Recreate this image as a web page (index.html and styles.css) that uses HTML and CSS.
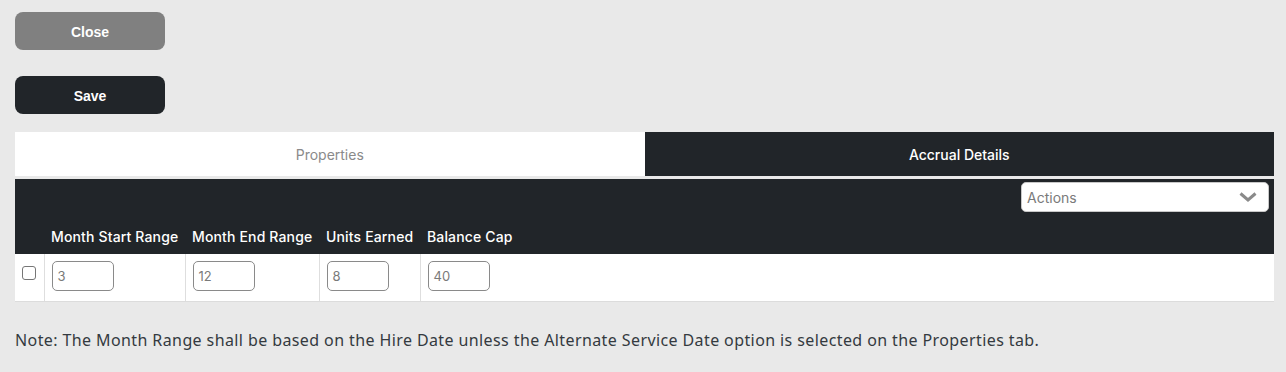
FILE: index.html
```html
<!DOCTYPE html>
<html lang="en">
<head>
<meta charset="utf-8">
<title>Accrual Details</title>
<link rel="stylesheet" href="styles.css">
</head>
<body>
<div class="page">
  <button class="btn btn-close" type="button">Close</button>
  <button class="btn btn-save" type="button">Save</button>

  <div class="tabs">
    <div class="tab">Properties</div>
    <div class="tab tab-active">Accrual Details</div>
  </div>

  <div class="grid">
    <div class="toolbar">
      <div class="select">
        <span class="select-label">Actions</span>
        <svg class="chevron" width="18" height="10" viewBox="0 0 18 10"><path d="M1.5 1.5 L9 8 L16.5 1.5" fill="none" stroke="#8a8a8a" stroke-width="3"/></svg>
      </div>
    </div>
    <table class="data">
      <colgroup>
        <col class="c-check">
        <col class="c-start">
        <col class="c-end">
        <col class="c-units">
        <col>
      </colgroup>
      <thead>
        <tr>
          <th></th>
          <th>Month Start Range</th>
          <th>Month End Range</th>
          <th>Units Earned</th>
          <th>Balance Cap</th>
        </tr>
      </thead>
      <tbody>
        <tr>
          <td class="check-cell"><span class="check"></span></td>
          <td><span class="field">3</span></td>
          <td><span class="field">12</span></td>
          <td><span class="field">8</span></td>
          <td class="last"><span class="field">40</span></td>
        </tr>
      </tbody>
    </table>
  </div>

  <p class="note">Note: The Month Range shall be based on the Hire Date unless the Alternate Service Date option is selected on the Properties tab.</p>
</div>
</body>
</html>
```

FILE: styles.css
```css
html, body {
  margin: 0;
  padding: 0;
  background: #e9e9e9;
}

.page {
  padding: 12px 12px 0 15px;
  font-family: Inter, "Noto Sans", sans-serif;
}

.btn {
  display: block;
  width: 150px;
  height: 38px;
  border: 0;
  border-radius: 8px;
  color: #ffffff;
  font-family: "Liberation Sans", Arial, sans-serif;
  font-weight: bold;
  font-size: 14px;
  padding: 2px 0 0 0;
  cursor: pointer;
}

.btn-close {
  background: #808080;
  margin-bottom: 26px;
}

.btn-save {
  background: #212529;
  margin-bottom: 18px;
}

.tabs {
  display: grid;
  grid-template-columns: 1fr 1fr;
  height: 44px;
  width: 1259px;
}

.tab {
  display: flex;
  align-items: center;
  justify-content: center;
  background: #ffffff;
  color: #8a8a8a;
  font-size: 14px;
}

.tab-active {
  background: #212529;
  color: #ffffff;
  font-weight: 500;
}

.grid {
  margin-top: 3px;
  width: 1259px;
  background: #212529;
}

.toolbar {
  display: flex;
  justify-content: flex-end;
  padding: 3px 5px 0 0;
}

.select {
  box-sizing: border-box;
  width: 248px;
  height: 30px;
  background: #ffffff;
  border: 1px solid #c8c8c8;
  border-radius: 5px;
  display: flex;
  align-items: center;
  justify-content: space-between;
  padding: 0 11px 0 5px;
}

.select-label {
  color: #7a7a7a;
  font-size: 14px;
}

.chevron {
  display: block;
}

.data {
  width: 100%;
  border-collapse: collapse;
  table-layout: fixed;
}

.c-check { width: 29px; }
.c-start { width: 141px; }
.c-end { width: 134px; }
.c-units { width: 101px; }

.data th {
  color: #ffffff;
  font-size: 14px;
  font-weight: 500;
  letter-spacing: 0.15px;
  text-align: left;
  line-height: 20px;
  padding: 15px 0 7px 7px;
  white-space: nowrap;
  vertical-align: bottom;
}

.data td {
  background: #ffffff;
  padding: 7px 0 10px 7px;
  border-right: 1px solid #dedede;
  border-bottom: 1px solid #dcdcdc;
  vertical-align: top;
  height: 30px;
}

.data td.last {
  border-right: 0;
}

.data td.check-cell {
  padding: 12px 0 0 7px;
}

.check {
  display: block;
  box-sizing: border-box;
  width: 14px;
  height: 14px;
  border: 1px solid #767676;
  border-radius: 3px;
  background: #ffffff;
}

.field {
  display: block;
  box-sizing: border-box;
  width: 62px;
  height: 30px;
  border: 1px solid #8a8a8a;
  border-radius: 5px;
  padding: 0 5px;
  line-height: 28px;
  font-size: 13px;
  color: #7a7a7a;
}

.note {
  margin: 27px 0 0 0;
  font-family: "Noto Sans", sans-serif;
  font-size: 16px;
  letter-spacing: 0.4px;
  line-height: 22px;
  color: #343a40;
}
```
